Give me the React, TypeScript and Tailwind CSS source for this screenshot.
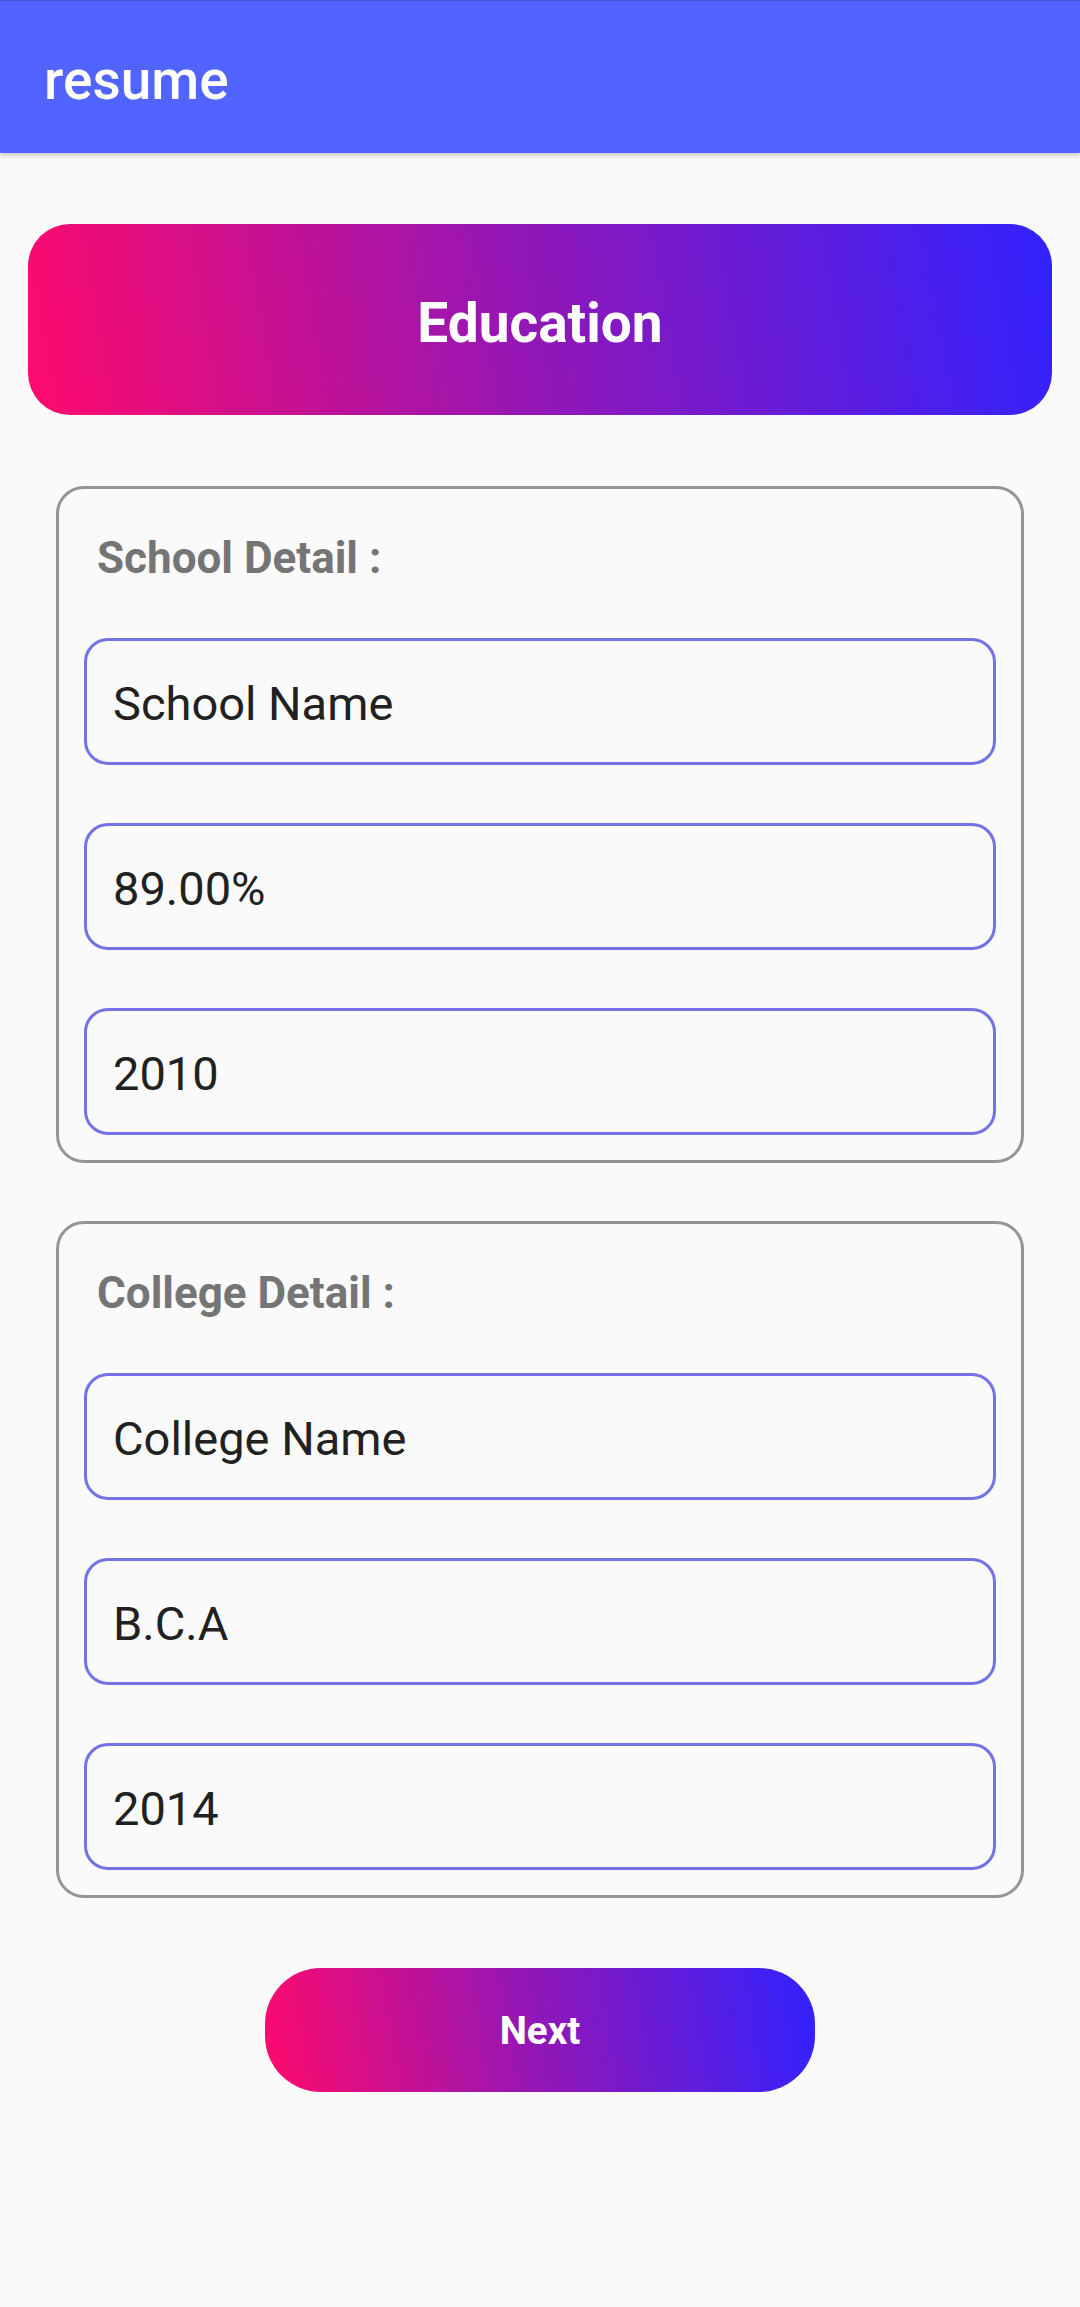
import React from "react";

const font = { fontFamily: "Roboto, 'Noto Sans', Arial, sans-serif" };

function Field({ value }: { value: string }) {
  return (
    <div className="h-[127px] w-full rounded-[24px] border-[3px] border-[#7373e6] flex items-center pl-[26px] pt-[3px]">
      <span className="text-[47px] leading-[55px] text-[#212121] font-normal">{value}</span>
    </div>
  );
}

function Card({ title, values }: { title: string; values: string[] }) {
  return (
    <div className="rounded-[28px] border-[3px] border-[#959595] px-[25px] pt-[43px] pb-[25px]">
      <div className="ml-[13px] text-[44px] leading-[52px] font-bold text-[#757575]">{title}</div>
      <div className="mt-[54px] flex flex-col gap-[58px]">
        {values.map((v) => (
          <Field key={v} value={v} />
        ))}
      </div>
    </div>
  );
}

export default function App() {
  return (
    <div className="min-h-[2307px] w-full bg-[#fafafa]" style={font}>
      <header className="relative z-10 h-[153px] w-full bg-[#5164ff] border-t border-[#4655d6] pl-[44px] pt-[47px] shadow-[0_2px_5px_rgba(0,0,0,0.22)]">
        <h1 className="text-[55px] leading-[64px] font-medium text-white">resume</h1>
      </header>

      <div className="px-[28px] pt-[71px]">
        <div className="h-[191px] w-full rounded-[42px] bg-[linear-gradient(80deg,#ff0a6c_0%,#9017b8_50%,#3122ff_100%)] flex justify-center pt-[67px]">
          <span className="text-[55px] leading-[64px] font-bold text-white">Education</span>
        </div>
      </div>

      <div className="mx-[56px] mt-[71px] flex flex-col gap-[58px]">
        <Card title="School Detail :" values={["School Name", "89.00%", "2010"]} />
        <Card title="College Detail :" values={["College Name", "B.C.A", "2014"]} />
      </div>

      <div className="mt-[70px] flex justify-center">
        <button className="h-[124px] w-[550px] rounded-[56px] bg-[linear-gradient(80deg,#ff0a6c_0%,#9017b8_50%,#3122ff_100%)] flex items-center justify-center">
          <span className="text-[38.5px] leading-[45px] font-bold text-white">Next</span>
        </button>
      </div>
    </div>
  );
}
